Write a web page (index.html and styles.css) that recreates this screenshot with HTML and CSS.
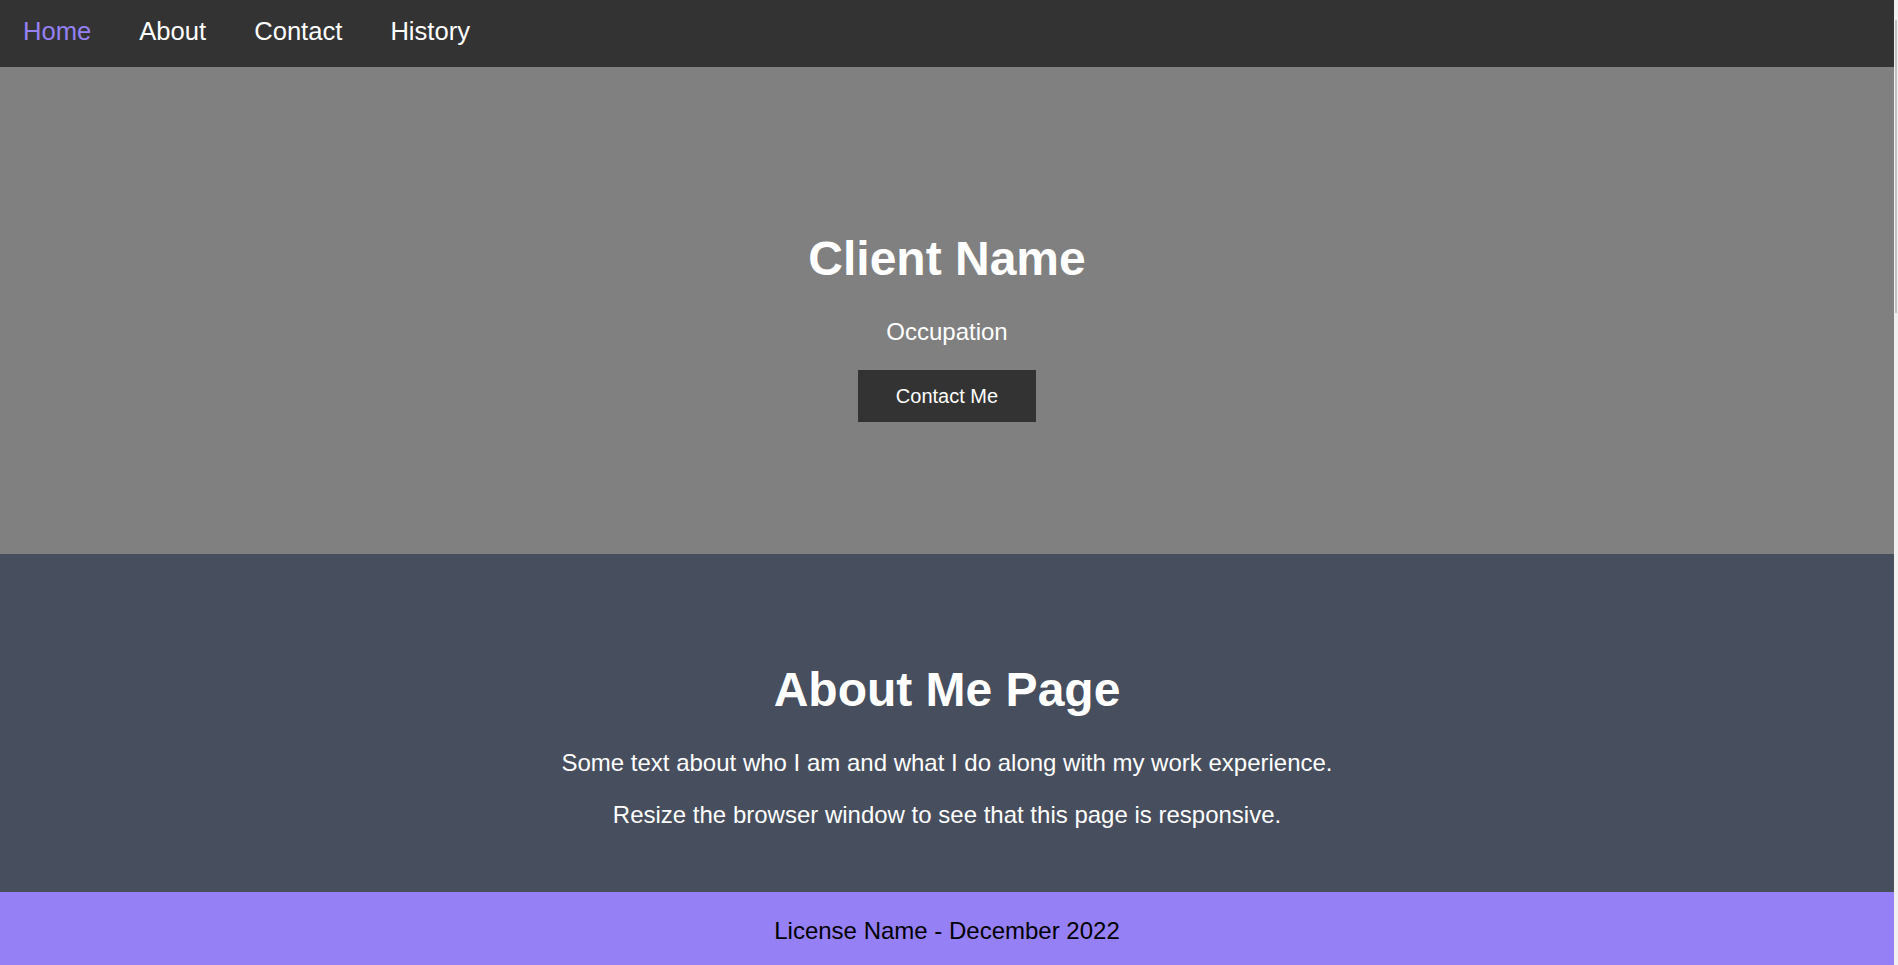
FILE: index.html
```html
<!DOCTYPE html>
<html lang="en">
<head>
<meta charset="utf-8">
<title>Client Name</title>
<link rel="stylesheet" href="styles.css">
</head>
<body>
<nav class="topnav">
  <a class="nav-link active" href="#home">Home</a>
  <a class="nav-link" href="#about">About</a>
  <a class="nav-link" href="#contact">Contact</a>
  <a class="nav-link" href="#history">History</a>
</nav>
<header class="hero" id="home">
  <div class="hero-inner">
    <h1 class="hero-title">Client Name</h1>
    <p class="hero-sub">Occupation</p>
    <a class="hero-btn" href="#contact">Contact Me</a>
  </div>
</header>
<section class="about" id="about">
  <h2 class="about-title">About Me Page</h2>
  <p class="about-text">Some text about who I am and what I do along with my work experience.</p>
  <p class="about-text">Resize the browser window to see that this page is responsive.</p>
</section>
<footer class="footer">
  <p class="footer-text">License Name - December 2022</p>
</footer>
</body>
</html>
```
FILE: styles.css
```css
html {
  background: #f1f1f1;
}

body {
  margin: 0 4px 0 0;
  font-family: "Liberation Sans", Arial, sans-serif;
  font-size: 24px;
  color: #fff;
  background: #fff;
}

/* imitation of the thin browser scrollbar thumb */
body::after {
  content: "";
  position: fixed;
  top: 20px;
  right: 1px;
  width: 2px;
  height: 293px;
  background: #c1c1c1;
}

.topnav {
  display: flex;
  gap: 7px;
  height: 67px;
  padding: 17px 0 0 2.5px;
  box-sizing: border-box;
  background: #333333;
}
.nav-link {
  padding: 0 20.5px;
  font-size: 25.6px;
  line-height: 29px;
  color: #fff;
  text-decoration: none;
}
.nav-link.active {
  color: #9580f5;
}

.hero {
  display: flex;
  align-items: center;
  justify-content: center;
  height: 487px;
  background: #808080;
  text-align: center;
}
.hero-title {
  margin: 32px 0;
  font-size: 48px;
  font-weight: bold;
}
.hero-sub {
  margin: 24px 0;
  font-size: 24px;
}
.hero-btn {
  display: inline-block;
  padding: 14px 38px;
  font-size: 20px;
  line-height: 24px;
  color: #fff;
  background: #333333;
  text-decoration: none;
  vertical-align: top;
}

.about {
  padding: 76px 20px 39px;
  background: #474e5d;
  text-align: center;
}
.about-title {
  margin: 32px 0;
  font-size: 48px;
  font-weight: bold;
}
.about-text {
  margin: 24px 0;
  font-size: 24px;
}

.footer {
  padding: 25px 20px 40px;
  background: #9580f5;
  text-align: center;
}
.footer-text {
  margin: 0;
  font-size: 24px;
  color: #000;
}
```
